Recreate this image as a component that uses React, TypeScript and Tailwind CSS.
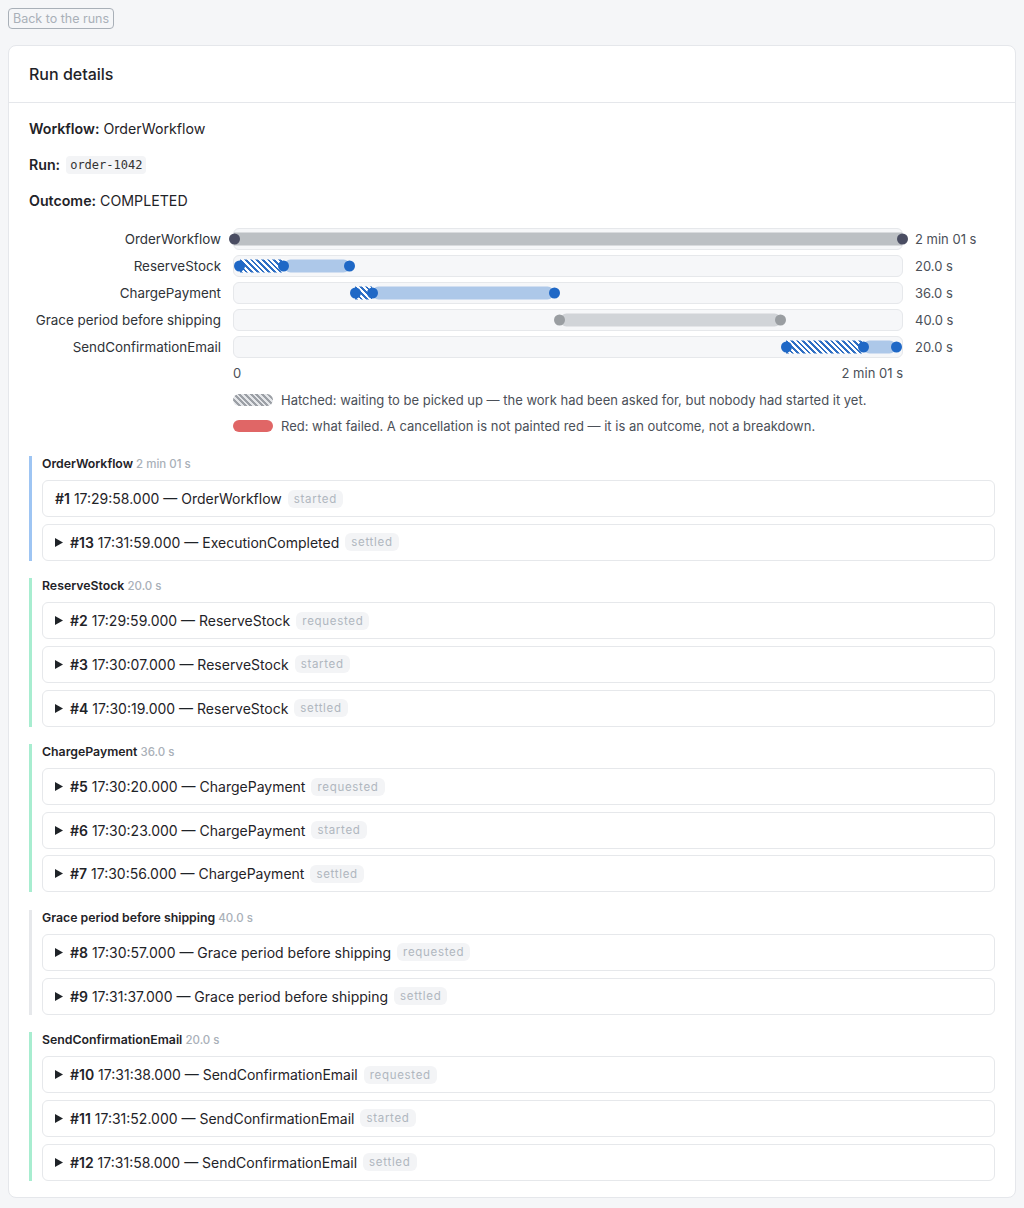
import type { CSSProperties } from "react";

const TOTAL = 121; // seconds, 17:29:58 → 17:31:59

type Lane = {
  label: string;
  duration: string;
  kind: "workflow" | "activity" | "timer";
  requested?: number;
  started: number;
  settled: number;
};

const lanes: Lane[] = [
  { label: "OrderWorkflow", duration: "2 min 01 s", kind: "workflow", started: 0, settled: 121 },
  { label: "ReserveStock", duration: "20.0 s", kind: "activity", requested: 1, started: 9, settled: 21 },
  { label: "ChargePayment", duration: "36.0 s", kind: "activity", requested: 22, started: 25, settled: 58 },
  { label: "Grace period before shipping", duration: "40.0 s", kind: "timer", started: 59, settled: 99 },
  { label: "SendConfirmationEmail", duration: "20.0 s", kind: "activity", requested: 100, started: 114, settled: 120 },
];

type Event = { n: number; at: string; name: string; state: string; open?: boolean };

const groups: { title: string; duration: string; tone: "workflow" | "activity" | "timer"; events: Event[] }[] = [
  {
    title: "OrderWorkflow",
    duration: "2 min 01 s",
    tone: "workflow",
    events: [
      { n: 1, at: "17:29:58.000", name: "OrderWorkflow", state: "started", open: false },
      { n: 13, at: "17:31:59.000", name: "ExecutionCompleted", state: "settled" },
    ],
  },
  {
    title: "ReserveStock",
    duration: "20.0 s",
    tone: "activity",
    events: [
      { n: 2, at: "17:29:59.000", name: "ReserveStock", state: "requested" },
      { n: 3, at: "17:30:07.000", name: "ReserveStock", state: "started" },
      { n: 4, at: "17:30:19.000", name: "ReserveStock", state: "settled" },
    ],
  },
  {
    title: "ChargePayment",
    duration: "36.0 s",
    tone: "activity",
    events: [
      { n: 5, at: "17:30:20.000", name: "ChargePayment", state: "requested" },
      { n: 6, at: "17:30:23.000", name: "ChargePayment", state: "started" },
      { n: 7, at: "17:30:56.000", name: "ChargePayment", state: "settled" },
    ],
  },
  {
    title: "Grace period before shipping",
    duration: "40.0 s",
    tone: "timer",
    events: [
      { n: 8, at: "17:30:57.000", name: "Grace period before shipping", state: "requested" },
      { n: 9, at: "17:31:37.000", name: "Grace period before shipping", state: "settled" },
    ],
  },
  {
    title: "SendConfirmationEmail",
    duration: "20.0 s",
    tone: "activity",
    events: [
      { n: 10, at: "17:31:38.000", name: "SendConfirmationEmail", state: "requested" },
      { n: 11, at: "17:31:52.000", name: "SendConfirmationEmail", state: "started" },
      { n: 12, at: "17:31:58.000", name: "SendConfirmationEmail", state: "settled" },
    ],
  },
];

const pct = (t: number) => (t / TOTAL) * 100;

function span(from: number, to: number): CSSProperties {
  return { left: `${pct(from)}%`, width: `${pct(to - from)}%` };
}

function at(t: number): CSSProperties {
  return { left: `calc(${pct(t)}% - 5.5px)` };
}

export default function App() {
  return (
    <div className="min-h-screen bg-[#f5f6f8] p-2 font-['Inter',sans-serif] text-[#1f2328]">
      <button className="block rounded border border-[#a9b0b8] px-1 text-[12.5px] leading-[19px] text-[#a9b0b8]">
        Back to the runs
      </button>

      <div className="mt-4 rounded-lg border border-[#e5e7eb] bg-white">
        <div className="border-b border-[#e5e7eb] px-5 py-4">
          <h2 className="text-[16px] font-medium leading-6">Run details</h2>
        </div>

        <div className="px-5 pb-4 pt-4">
          <p className="mb-4 text-[14.2px] leading-5">
            <b className="font-semibold">Workflow:</b> OrderWorkflow
          </p>
          <p className="mb-4 flex items-center gap-1.5 text-[14.2px] leading-5">
            <b className="font-semibold">Run:</b>
            <code className="rounded bg-[#f3f4f6] px-1 font-['DejaVu_Sans_Mono',monospace] text-[12px] leading-[18px] text-[#333]">
              order-1042
            </code>
          </p>
          <p className="text-[14.2px] leading-5">
            <b className="font-semibold">Outcome:</b> COMPLETED
          </p>

          <Timeline />

          <div className="mt-5 flex flex-col gap-[17.5px]">
            {groups.map((g) => (
              <Group key={g.title} {...g} />
            ))}
          </div>
        </div>
      </div>
    </div>
  );
}

function Timeline() {
  return (
    <div className="mt-[17px]">
      <div className="grid grid-cols-[192px_1fr_80px] items-center gap-x-3 gap-y-[5px]">
        {lanes.map((l) => (
          <LaneRow key={l.label} lane={l} />
        ))}
        <div />
        <div className="flex justify-between pt-[2px] text-[13px] leading-4 text-[#4b5058]">
          <span>0</span>
          <span>2 min 01 s</span>
        </div>
        <div />
      </div>

      <div className="mt-[9px] flex flex-col gap-1.5 pl-[204px] text-[13px] leading-5 text-[#4b5058]">
        <div className="flex items-center gap-2">
          <span className="h-3 w-10 rounded-full bg-[repeating-linear-gradient(45deg,#9ca0a6_0_2px,#e4e6e9_2px_4px)]" />
          Hatched: waiting to be picked up — the work had been asked for, but nobody had started it yet.
        </div>
        <div className="flex items-center gap-2">
          <span className="h-3 w-10 rounded-full bg-[#e06666]" />
          Red: what failed. A cancellation is not painted red — it is an outcome, not a breakdown.
        </div>
      </div>
    </div>
  );
}

function LaneRow({ lane }: { lane: Lane }) {
  return (
    <>
      <div className="truncate text-right text-[13.4px] leading-5 text-[#2f3338]">{lane.label}</div>
      <div className="relative h-[22px] rounded-md border border-[#e6e8eb] bg-[#f6f7f9]">
        {lane.kind === "workflow" && (
          <>
            <span className="absolute top-1/2 h-[13px] -translate-y-1/2 bg-[#bcc0c4]" style={span(lane.started, lane.settled)} />
            <Dot t={lane.started} color="bg-[#4a4d62]" />
            <Dot t={lane.settled} color="bg-[#4a4d62]" />
          </>
        )}
        {lane.kind === "timer" && (
          <>
            <span className="absolute top-1/2 h-[13px] -translate-y-1/2 rounded-full bg-[#d1d4d8]" style={span(lane.started, lane.settled)} />
            <Dot t={lane.started} color="bg-[#9a9ea2]" />
            <Dot t={lane.settled} color="bg-[#9a9ea2]" />
          </>
        )}
        {lane.kind === "activity" && lane.requested != null && (
          <>
            <span
              className="absolute top-1/2 h-[13px] -translate-y-1/2 bg-[repeating-linear-gradient(45deg,#2f6fc4_0_2px,#ffffff_2px_4px)]"
              style={span(lane.requested, lane.started)}
            />
            <span className="absolute top-1/2 h-[13px] -translate-y-1/2 rounded-full bg-[#adc8e9]" style={span(lane.started, lane.settled)} />
            <Dot t={lane.requested} color="bg-[#1f68c6]" />
            <Dot t={lane.started} color="bg-[#1f68c6]" />
            <Dot t={lane.settled} color="bg-[#1f68c6]" />
          </>
        )}
      </div>
      <div className="text-[13px] leading-5 text-[#4b5058]">{lane.duration}</div>
    </>
  );
}

function Dot({ t, color }: { t: number; color: string }) {
  return <span className={`absolute top-1/2 h-[11px] w-[11px] -translate-y-1/2 rounded-full ${color}`} style={at(t)} />;
}

const toneBorder = {
  workflow: "border-[#9ec5f3]",
  activity: "border-[#a8edd0]",
  timer: "border-[#e6e8eb]",
};

function Group({
  title,
  duration,
  tone,
  events,
}: {
  title: string;
  duration: string;
  tone: "workflow" | "activity" | "timer";
  events: Event[];
}) {
  return (
    <section className={`border-l-[3px] pl-[10px] ${toneBorder[tone]}`}>
      <h3 className="text-[12.3px] font-semibold leading-4 text-[#1f2328]">
        {title} <span className="text-[11.5px] font-medium text-[#a9b0b8]">{duration}</span>
      </h3>
      <div className="mt-2 flex flex-col gap-[6.7px]">
        {events.map((e) => (
          <EventRow key={e.n} ev={e} />
        ))}
      </div>
    </section>
  );
}

function EventRow({ ev }: { ev: Event }) {
  const expandable = ev.open !== false;
  return (
    <div className="flex h-[37px] items-center rounded-md border border-[#e6e8eb] bg-white px-3 text-[14px] text-[#1f2328]">
      {expandable && (
        <svg width="8" height="9" viewBox="0 0 8 9" className="mr-[7px] shrink-0">
          <path d="M0 0 L8 4.5 L0 9 Z" fill="#1f2328" />
        </svg>
      )}
      <span>
        <b className="font-semibold">#{ev.n}</b> {ev.at} — {ev.name}
      </span>
      <span className="ml-1.5 rounded-md bg-[#f3f4f6] px-1.5 text-[11.5px] leading-[18px] tracking-[0.06em] text-[#b0b7bf]">
        {ev.state}
      </span>
    </div>
  );
}
